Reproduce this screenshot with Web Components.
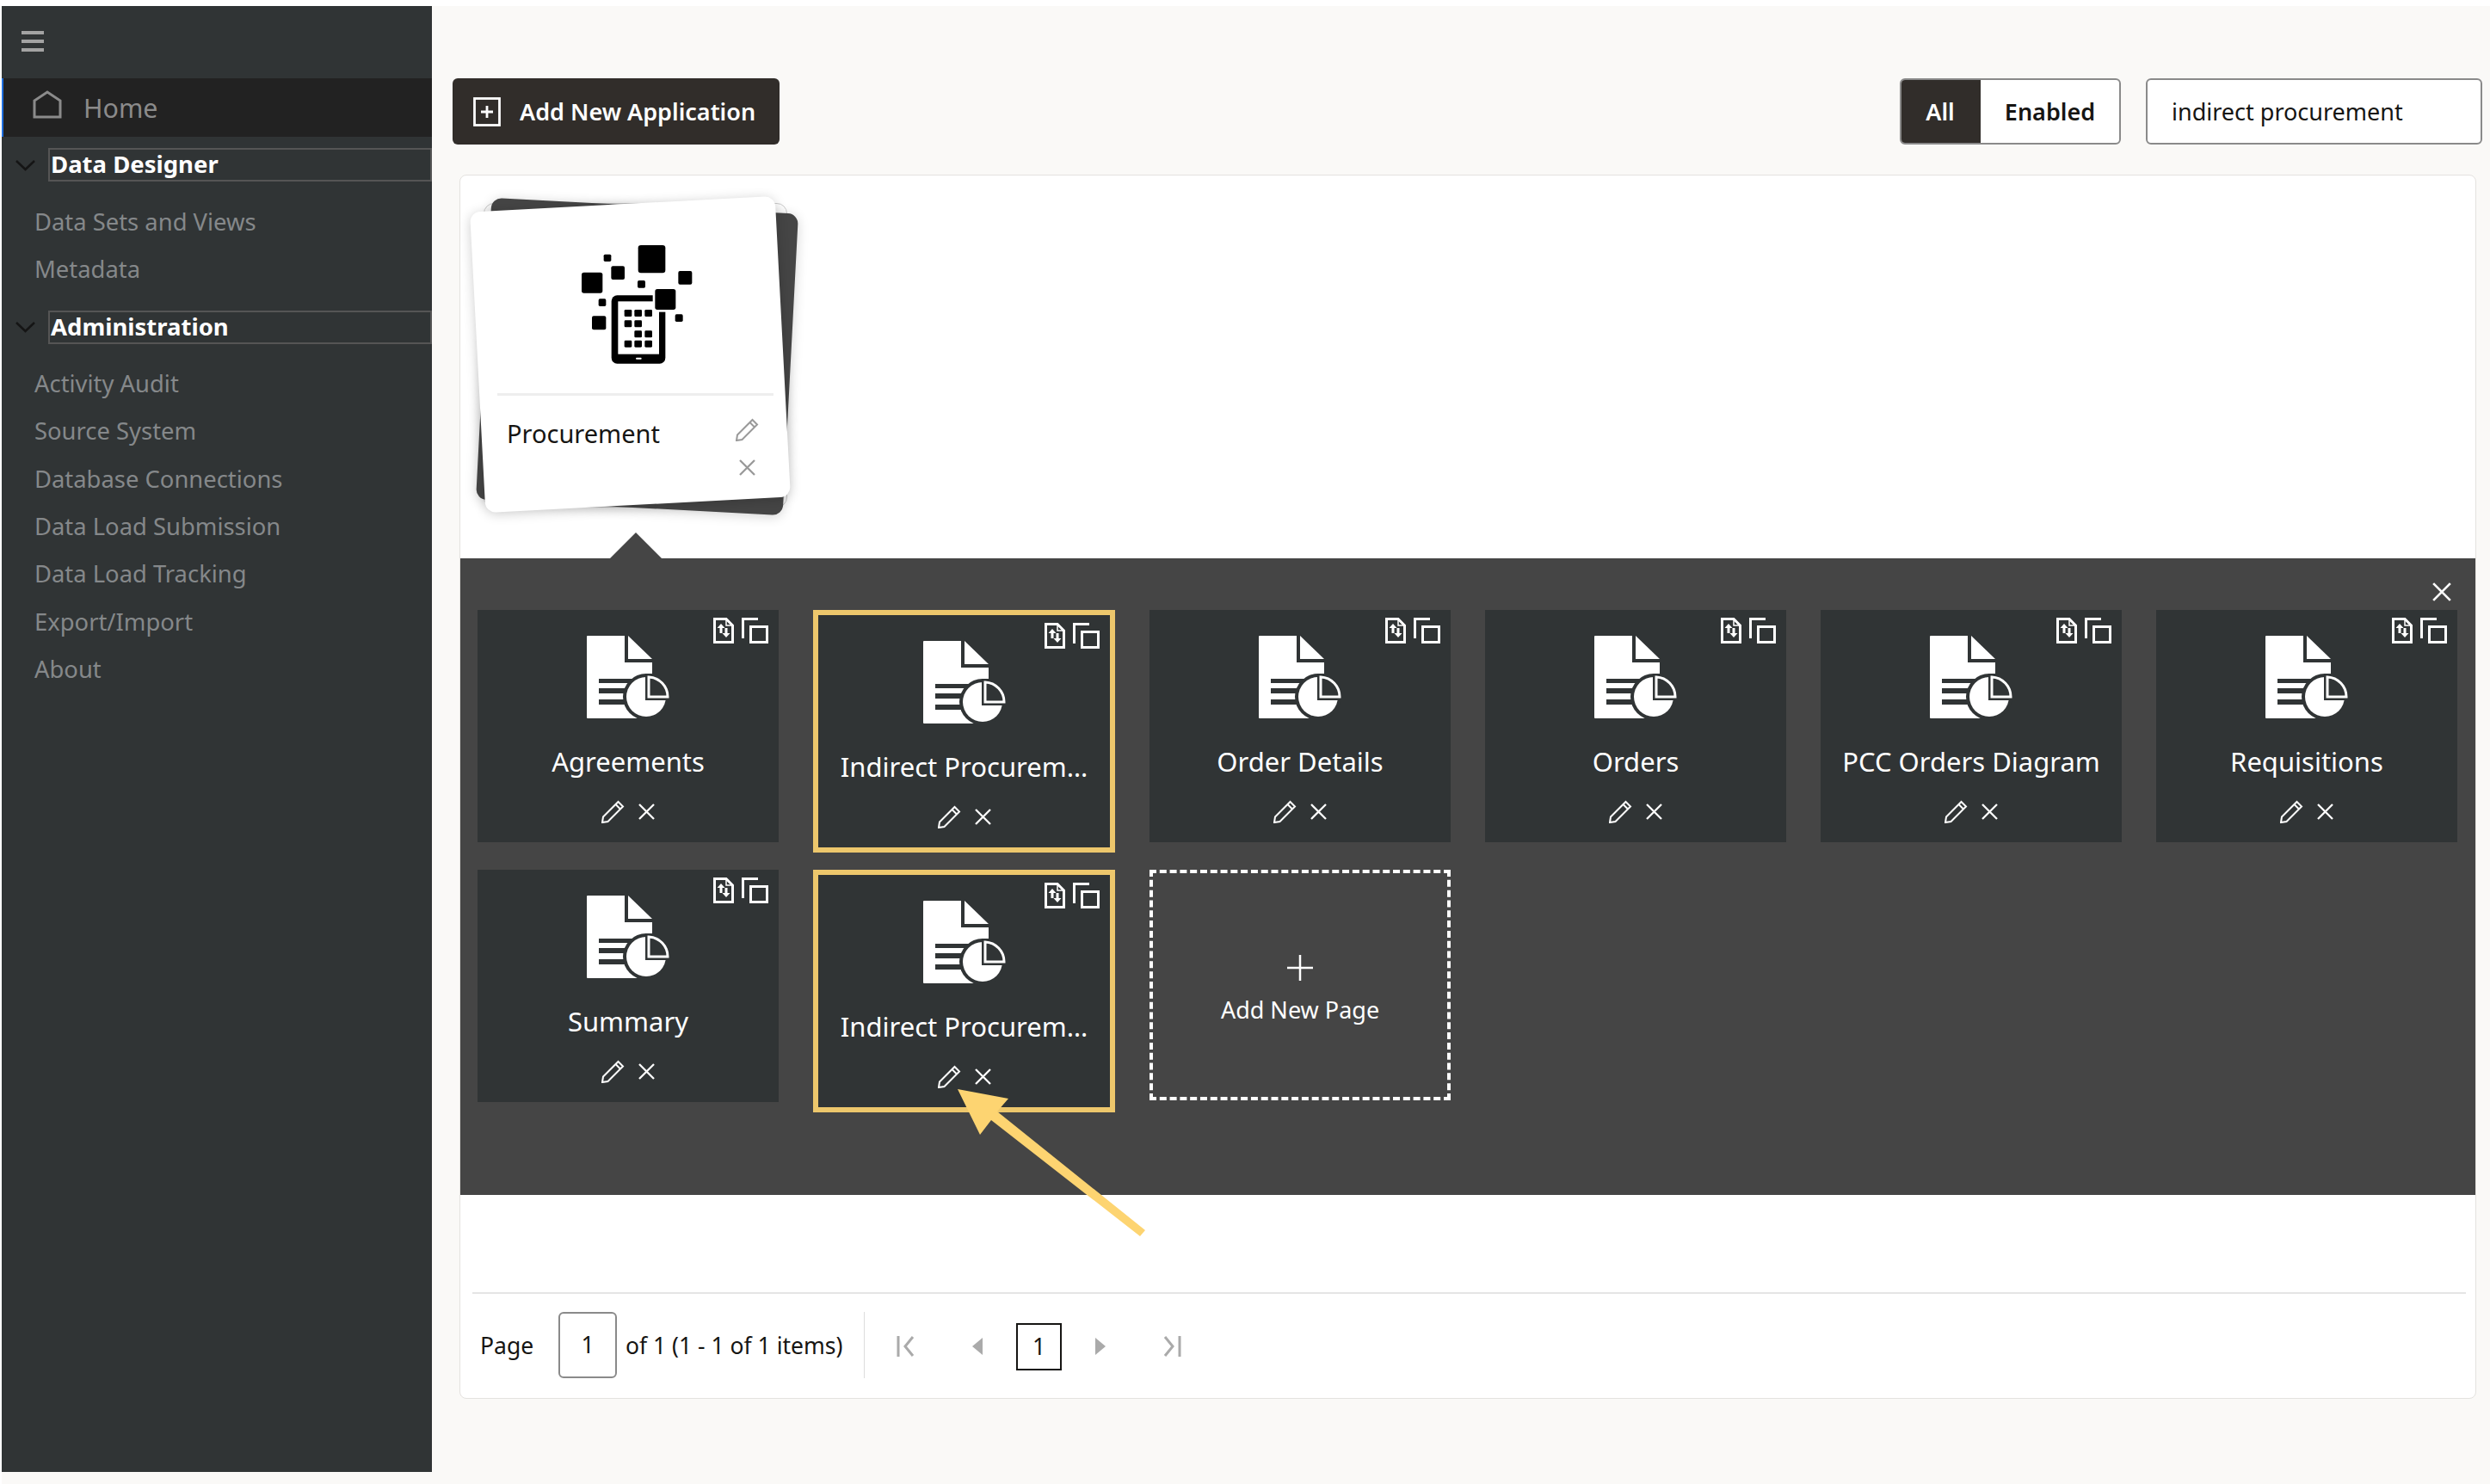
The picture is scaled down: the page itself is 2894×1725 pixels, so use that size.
<!DOCTYPE html>
<html lang="en">
<head>
<meta charset="utf-8">
<title>Applications</title>
<style>
  html, body { margin: 0; padding: 0; background: #fff; }
  body { font-family: "Noto Sans", "Open Sans", sans-serif; }
</style>
</head>
<body>
<app-shell>
  <side-nav slot="nav">
    <nav-group label="Data Designer">
      <nav-item>Data Sets and Views</nav-item>
      <nav-item>Metadata</nav-item>
    </nav-group>
    <nav-group label="Administration">
      <nav-item>Activity Audit</nav-item>
      <nav-item>Source System</nav-item>
      <nav-item>Database Connections</nav-item>
      <nav-item>Data Load Submission</nav-item>
      <nav-item>Data Load Tracking</nav-item>
      <nav-item>Export/Import</nav-item>
      <nav-item>About</nav-item>
    </nav-group>
  </side-nav>
  <app-toolbar slot="toolbar"></app-toolbar>
  <app-panel slot="panel">
    <app-stack name="Procurement"></app-stack>
    <page-drawer slot="drawer">
      <page-tile name="Agreements"></page-tile>
      <page-tile name="Indirect Procurem…" selected></page-tile>
      <page-tile name="Order Details"></page-tile>
      <page-tile name="Orders"></page-tile>
      <page-tile name="PCC Orders Diagram"></page-tile>
      <page-tile name="Requisitions"></page-tile>
      <page-tile name="Summary"></page-tile>
      <page-tile name="Indirect Procurem…" selected></page-tile>
      <add-tile></add-tile>
    </page-drawer>
    <app-pager slot="pager"></app-pager>
  </app-panel>
</app-shell>

<script>
const ICONS = {
  pencil: `<svg width="27" height="27" viewBox="0 0 27 27" fill="none" stroke="currentColor" stroke-width="2"><path d="M1 26 L2 19.500 L19.500 2 L25 7.500 L7.500 25 Z"/><path d="M16.500 5 L22 10.500"/></svg>`,
  close: `<svg width="19" height="19" viewBox="0 0 19 19" fill="none" stroke="currentColor" stroke-width="2.300"><path d="M1 1 L18 18 M18 1 L1 18"/></svg>`,
  doc: `<svg width="96" height="96" viewBox="0 0 96 96" fill="#fff">
    <path d="M1 0 H44 V31 H76 V60 H60 V96 H1 Q0 96 0 95 V1 Q0 0 1 0 Z"/>
    <path d="M48 0 L76 27 H48 Z"/>
    <g fill="#303435"><rect x="14" y="50" width="50" height="5"/><rect x="14" y="61" width="44" height="6"/><rect x="14" y="74" width="44" height="6"/></g>
    <circle cx="69" cy="71" r="27" fill="#303435"/>
    <circle cx="69" cy="71" r="23"/>
    <path d="M68 44 H96 V75 H68 Z" fill="#303435"/>
    <path d="M72 48 A 23 23 0 0 1 94 71 H72 Z" fill="#303435" stroke="#fff" stroke-width="3"/>
  </svg>`,
  badges: `<svg width="64" height="30" viewBox="0 0 64 30" fill="none" stroke="#fff">
    <path d="M1.500 1.500 H15 L22.500 9 V28.500 H1.500 Z" stroke-width="3"/>
    <path d="M15 2 V9 H22" stroke-width="1.500"/>
    <path d="M9 7 L4.500 12 H7.500 V18 H10.500 V12 H13.500 Z M15 23 L19.500 18 H16.500 V12 H13.500 V18 H10.500 Z" fill="#fff" stroke="none"/>
    <path d="M52 1.500 H34.500 V24" stroke-width="3"/>
    <rect x="43.500" y="10.500" width="19" height="18" stroke-width="3"/>
  </svg>`
};

class AppShell extends HTMLElement {
  constructor() {
    super();
    this.attachShadow({ mode: 'open' });
    this.shadowRoot.innerHTML = `
      <style>
        :host { display: block; width: 2894px; height: 1725px; box-sizing: border-box; padding: 7px 0 0 2px; position: relative; overflow: hidden; }
        .wrap { display: grid; grid-template-columns: 500px 1fr; height: 100%; background: #faf9f7; }
        .main { padding: 84px 9px 0 24px; }
        .cardwrap { margin: 35px -2px 0 8px; width: 2344px; }
        .arrow { position: absolute; left: 1100px; top: 1250px; }
      </style>
      <div class="wrap">
        <slot name="nav"></slot>
        <div class="main">
          <slot name="toolbar"></slot>
          <div class="cardwrap"><slot name="panel"></slot></div>
        </div>
      </div>
      <svg class="arrow" width="240" height="200" viewBox="1100 1250 240 200"><path fill="#fdd471" d="M1113 1266 L1172 1277 L1159 1292 L1331 1430 L1325 1437 L1152 1302 L1139 1319 Z"/></svg>`;
  }
}

class SideNav extends HTMLElement {
  constructor() {
    super();
    this.attachShadow({ mode: 'open' });
    this.shadowRoot.innerHTML = `
      <style>
        :host { display: block; height: 1704px; background: #303435; font-family: "Noto Sans", sans-serif; }
        .burger { height: 84px; box-sizing: border-box; padding: 29px 0 0 23px; }
        .burger i { display: block; width: 26px; height: 4px; background: #a3a3a3; margin-bottom: 6px; }
        .home { height: 68px; box-sizing: border-box; background: #222; border-left: 2px solid #1f6fe0; display: flex; padding-left: 33px; margin-bottom: 13px; }
        .home svg { margin-top: 14px; }
        .home span { margin-left: 24px; margin-top: 10px; font-size: 30.400px; line-height: 50px; color: #8b8b8b; }
      </style>
      <div class="burger"><i></i><i></i><i></i></div>
      <div class="home">
        <svg width="36" height="34" viewBox="0 0 36 34" fill="none" stroke="#8b8b8b" stroke-width="3"><path d="M3 31 V12 L18 2 L33 12 V31 Z"/></svg>
        <span>Home</span>
      </div>
      <slot></slot>`;
  }
}

class NavGroup extends HTMLElement {
  constructor() {
    super();
    this.attachShadow({ mode: 'open' });
    this.shadowRoot.innerHTML = `
      <style>
        :host { display: block; margin-bottom: 20.500px; }
        .head { display: flex; align-items: center; height: 39px; padding-left: 15px; margin-bottom: 18.500px; }
        .head svg { flex: none; margin-right: 14px; }
        .label { flex: 1; height: 39px; box-sizing: border-box; border: 2px solid #555; padding-left: 1px; font-size: 27.500px; line-height: 33px; font-weight: 700; color: #fff; }
      </style>
      <div class="head">
        <svg width="25" height="14" viewBox="0 0 25 14" fill="none" stroke="#151515" stroke-width="2.500"><path d="M2 2 L12.500 12 L23 2"/></svg>
        <div class="label">${this.getAttribute('label')}</div>
      </div>
      <slot></slot>`;
  }
}

class NavItem extends HTMLElement {
  constructor() {
    super();
    this.attachShadow({ mode: 'open' });
    this.shadowRoot.innerHTML = `
      <style>
        :host { display: block; padding-left: 38px; height: 55.300px; line-height: 55.300px; font-size: 27.400px; color: #85888a; white-space: nowrap; }
      </style>
      <slot></slot>`;
  }
}

class AppToolbar extends HTMLElement {
  constructor() {
    super();
    this.attachShadow({ mode: 'open' });
    this.shadowRoot.innerHTML = `
      <style>
        :host { display: flex; height: 77px; font-family: "Noto Sans", sans-serif; color: #161513; }
        .add { display: flex; align-items: center; width: 380px; box-sizing: border-box; padding-left: 24px; background: #312d2a; border-radius: 6px; color: #fff; font-size: 27px; font-weight: 600; }
        .add svg { margin-right: 22px; }
        .spacer { flex: 1; }
        .toggle { display: flex; width: 257px; box-sizing: border-box; border: 2px solid #8a8a8a; border-radius: 6px; background: #fff; overflow: hidden; font-size: 27px; font-weight: 600; margin-right: 29px; }
        .toggle div { display: flex; align-items: center; justify-content: center; }
        .all { width: 94px; margin: -2px 0 -2px -2px; background: #312d2a; color: #fff; }
        .enabled { flex: 1; }
        .search { width: 391px; box-sizing: border-box; border: 2px solid #8a8a8a; border-radius: 6px; background: #fff; padding-left: 28px; font-size: 27px; line-height: 73px; }
      </style>
      <div class="add">
        <svg width="32" height="34" viewBox="0 0 32 34" fill="none" stroke="#fff" stroke-width="2.800"><rect x="1.500" y="1.500" width="29" height="31"/><path d="M16 10 V24 M9 17 H23"/></svg>
        <span>Add New Application</span>
      </div>
      <div class="spacer"></div>
      <div class="toggle"><div class="all">All</div><div class="enabled">Enabled</div></div>
      <div class="search">indirect procurement</div>`;
  }
}

class AppPanel extends HTMLElement {
  constructor() {
    super();
    this.attachShadow({ mode: 'open' });
    this.shadowRoot.innerHTML = `
      <style>
        :host { display: block; height: 1423px; box-sizing: border-box; background: #fff; border: 1px solid #e4e2df; border-radius: 8px; }
        .top { height: 445px; box-sizing: border-box; padding: 32px 0 0 27px; }
      </style>
      <div class="top"><slot></slot></div>
      <slot name="drawer"></slot>
      <slot name="pager"></slot>`;
  }
}

class AppStack extends HTMLElement {
  constructor() {
    super();
    this.attachShadow({ mode: 'open' });
    const squares = [[665,225,95,97,10],[805,315,48,47,6],[468,320,73,72,8],[571,298,47,47,6],[545,257,26,25,5],[663,348,27,26,5],[527,412,26,26,5],[504,472,49,48,6],[794,466,27,26,5]];
    const keys = [[617,450],[652,450],[688,450],[617,487],[652,487],[652,523],[688,523],[617,557],[652,557],[688,557]];
    const rect = (s) => `<rect x="${s[0]}" y="${s[1]}" width="${s[2]}" height="${s[3]}" rx="${s[4]}"/>`;
    this.shadowRoot.innerHTML = `
      <style>
        :host { display: block; position: relative; width: 353px; height: 354px; font-family: "Noto Sans", sans-serif; }
        .layer { position: absolute; box-sizing: border-box; border-radius: 12px; }
        .base { inset: 0; background: #fff; border: 1px solid #ccc; }
        .dark { left: 0; top: 3px; width: 357px; height: 351px; background: #454545; transform: rotate(3deg); box-shadow: 0 2px 14px rgba(0,0,0,.18); }
        .front { left: -7px; top: 1px; width: 355px; height: 350px; background: #fff; transform: rotate(-3deg); box-shadow: 0 2px 14px rgba(0,0,0,.2); }
        .content { position: relative; height: 100%; box-sizing: border-box; padding-top: 48px; }
        .logo { display: block; margin-left: 113px; }
        .rule { height: 3px; background: #eee; margin: 33px 16px 0 16px; }
        .row { display: flex; padding: 19px 0 0 27px; font-size: 29px; line-height: 50px; color: #161513; }
        .row span { flex: 1; }
        .acts { display: flex; flex-direction: column; align-items: center; gap: 21px; width: 27px; margin-right: 33px; margin-top: 7px; color: #999; }
        .acts svg { display: block; }
      </style>
      <div class="layer base"></div>
      <div class="layer dark"></div>
      <div class="layer front"></div>
      <div class="content">
        <svg class="logo" width="130" height="140" viewBox="465 222 390 420" fill="#000">
          ${squares.map(rect).join('')}
          <rect x="572" y="400" width="188" height="238" rx="20"/>
          <rect x="595" y="421" width="143" height="184" fill="#fff"/>
          <rect x="657" y="617" width="20" height="6" rx="3" fill="#fff"/>
          ${keys.map((k) => `<rect x="${k[0]}" y="${k[1]}" width="26" height="24" rx="4"/>`).join('')}
          <rect x="716" y="370" width="88" height="88" fill="#fff"/>
          <rect x="724" y="378" width="72" height="72" rx="8"/>
        </svg>
        <div class="rule"></div>
        <div class="row"><span>${this.getAttribute('name')}</span><div class="acts">${ICONS.pencil}${ICONS.close}</div></div>
      </div>`;
  }
}

class PageDrawer extends HTMLElement {
  constructor() {
    super();
    this.attachShadow({ mode: 'open' });
    this.shadowRoot.innerHTML = `
      <style>
        :host { display: flex; flex-wrap: wrap; align-items: flex-start; align-content: flex-start; gap: 20px 40px; position: relative; height: 740px; box-sizing: border-box; padding: 60px 0 0 20px; background: #454545; color: #fff; font-family: "Noto Sans", sans-serif; }
        .notch { position: absolute; left: 174px; top: -30px; width: 0; height: 0; border-left: 30px solid transparent; border-right: 30px solid transparent; border-bottom: 30px solid #454545; }
        .close { position: absolute; left: 2292px; top: 28px; }
        .close svg { display: block; width: 22px; height: 22px; }
      </style>
      <div class="notch"></div>
      <div class="close">${ICONS.close}</div>
      <slot></slot>`;
  }
}

class PageTile extends HTMLElement {
  constructor() {
    super();
    this.attachShadow({ mode: 'open' });
    this.shadowRoot.innerHTML = `
      <style>
        :host { display: flex; flex-direction: column; align-items: center; position: relative; width: 350px; height: 270px; box-sizing: border-box; padding-top: 30px; background: #303435; color: #fff; }
        :host([selected]) { width: 351px; height: 282px; border: 6px solid #edc76c; }
        .doc svg { display: block; }
        .badges { position: absolute; right: 12px; top: 9px; }
        .badges svg { display: block; }
        .title { margin-top: 30px; height: 40px; line-height: 40px; font-size: 31px; white-space: nowrap; }
        .acts { display: flex; align-items: center; gap: 16px; margin-top: 25px; }
        .acts svg { display: block; }
      </style>
      <div class="badges">${ICONS.badges}</div>
      <div class="doc">${ICONS.doc}</div>
      <div class="title">${this.getAttribute('name')}</div>
      <div class="acts">${ICONS.pencil}${ICONS.close}</div>`;
  }
}

class AddTile extends HTMLElement {
  constructor() {
    super();
    this.attachShadow({ mode: 'open' });
    this.shadowRoot.innerHTML = `
      <style>
        :host { display: flex; flex-direction: column; align-items: center; width: 350px; height: 268px; box-sizing: border-box; border: 4px dashed #fff; padding-top: 95px; color: #fff; font-size: 27px; }
        svg { display: block; }
        span { margin-top: 15px; line-height: 38px; }
      </style>
      <svg width="30" height="30" viewBox="0 0 30 30" stroke="#fff" stroke-width="2.500"><path d="M15 0 V30 M0 15 H30"/></svg>
      <span>Add New Page</span>`;
  }
}

class AppPager extends HTMLElement {
  constructor() {
    super();
    this.attachShadow({ mode: 'open' });
    this.shadowRoot.innerHTML = `
      <style>
        :host { display: block; padding-top: 113px; font-family: "Noto Sans", sans-serif; font-size: 26.500px; color: #161513; }
        .rule { height: 2px; background: #e5e5e5; margin: 0 11px 0 14px; }
        .row { display: flex; align-items: center; height: 77px; margin: 21px 0 0 23px; }
        .page { width: 91px; }
        .input { width: 68px; height: 77px; box-sizing: border-box; border: 2px solid #8a8a8a; border-radius: 6px; text-align: center; line-height: 73px; }
        .info { margin-left: 10px; width: 277px; white-space: nowrap; }
        .sep { width: 1px; height: 77px; background: #ddd; }
        .nav { display: flex; align-items: center; margin-top: 3px; }
        .nav svg { display: block; }
        .cur { width: 53px; height: 55px; box-sizing: border-box; border: 2px solid #161513; text-align: center; line-height: 51px; }
      </style>
      <div class="rule"></div>
      <div class="row">
        <div class="page">Page</div>
        <div class="input">1</div>
        <div class="info">of 1 (1 - 1 of 1 items)</div>
        <div class="sep"></div>
        <div class="nav">
          <svg style="margin-left:37px" width="21" height="24" viewBox="0 0 21 24" fill="none" stroke="#aaa" stroke-width="3"><path d="M2 0 V24 M19 1 L10 12 L19 23"/></svg>
          <svg style="margin-left:67px" width="12" height="20" viewBox="0 0 12 20" fill="#aaa"><path d="M12 0 V20 L0 10 Z"/></svg>
          <div class="cur" style="margin-left:39px">1</div>
          <svg style="margin-left:39px" width="12" height="20" viewBox="0 0 12 20" fill="#aaa"><path d="M0 0 V20 L12 10 Z"/></svg>
          <svg style="margin-left:67px" width="21" height="24" viewBox="0 0 21 24" fill="none" stroke="#aaa" stroke-width="3"><path d="M19 0 V24 M2 1 L11 12 L2 23"/></svg>
        </div>
      </div>`;
  }
}

customElements.define('app-shell', AppShell);
customElements.define('side-nav', SideNav);
customElements.define('nav-group', NavGroup);
customElements.define('nav-item', NavItem);
customElements.define('app-toolbar', AppToolbar);
customElements.define('app-panel', AppPanel);
customElements.define('app-stack', AppStack);
customElements.define('page-drawer', PageDrawer);
customElements.define('page-tile', PageTile);
customElements.define('add-tile', AddTile);
customElements.define('app-pager', AppPager);
</script>
</body>
</html>
